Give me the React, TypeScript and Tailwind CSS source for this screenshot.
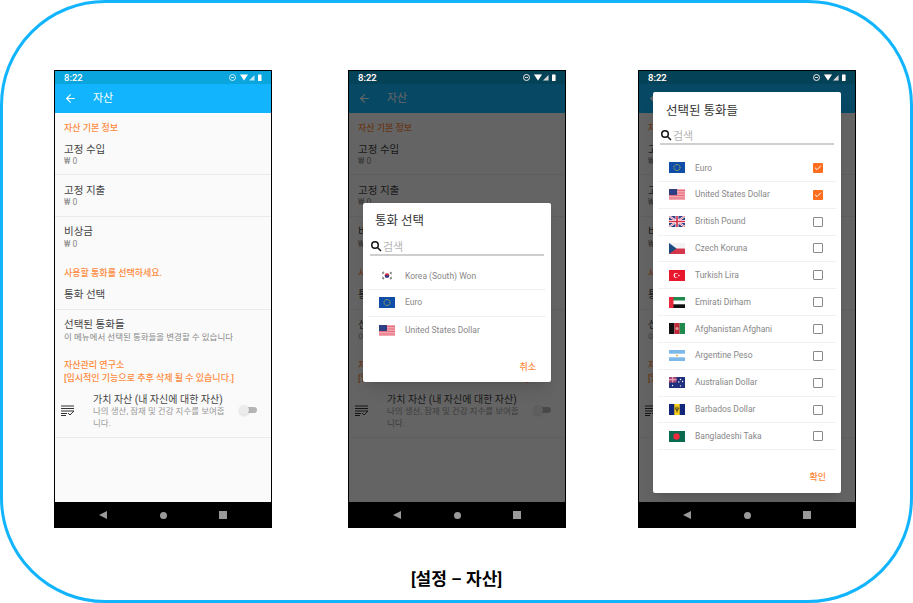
import React from 'react';
import { ArrowLeft, Check } from 'lucide-react';

const FONT = "font-['Roboto','Noto_Sans_CJK_KR',sans-serif]";

// flags are drawn on a 16x11 box
const flags: Record<string, React.ReactNode> = {
  kr: (
    <>
      <rect width="16" height="11" fill="#fff" />
      <circle cx="8" cy="5.5" r="2.3" fill="#d0253f" />
      <path d="M5.7 5.5a2.3 2.3 0 0 0 4.6 0z" fill="#1c3f94" />
      <path d="M3 3l2-1.2M3.4 4l1.8-1.2M11 2l2 1.2M10.8 3l1.8 1.2M3 8l2 1.2M3.4 7l1.8 1.2M11 9.2L13 8M10.8 8.2L12.6 7" stroke="#333" strokeWidth="0.7" />
    </>
  ),
  eu: (
    <>
      <rect width="16" height="11" fill="#0f4da8" />
      <circle cx="8" cy="5.5" r="3" fill="none" stroke="#e3d22a" strokeWidth="0.9" strokeDasharray="0.9 0.7" />
    </>
  ),
  us: (
    <>
      <rect width="16" height="11" fill="#f3a6ae" />
      <path d="M0 1.5h16M0 4h16M0 6.5h16M0 9h16" stroke="#e4687a" strokeWidth="0.9" />
      <rect width="8" height="6" fill="#2f3f86" />
    </>
  ),
  gb: (
    <>
      <rect width="16" height="11" fill="#2f3f86" />
      <path d="M0 0l16 11M16 0L0 11" stroke="#fff" strokeWidth="2" />
      <path d="M0 0l16 11M16 0L0 11" stroke="#e0566c" strokeWidth="0.8" />
      <path d="M8 0v11M0 5.5h16" stroke="#fff" strokeWidth="3" />
      <path d="M8 0v11M0 5.5h16" stroke="#d92f47" strokeWidth="1.7" />
    </>
  ),
  cz: (
    <>
      <rect width="16" height="5.5" fill="#f4f4f6" />
      <rect y="5.5" width="16" height="5.5" fill="#d3374a" />
      <path d="M0 0l7.5 5.5L0 11z" fill="#1c4b82" />
    </>
  ),
  tr: (
    <>
      <rect width="16" height="11" fill="#e8172c" />
      <circle cx="7" cy="5.5" r="2.4" fill="#fff" />
      <circle cx="7.7" cy="5.5" r="1.9" fill="#e8172c" />
      <circle cx="10" cy="5.5" r="0.7" fill="#fff" />
    </>
  ),
  ae: (
    <>
      <rect width="16" height="3.7" fill="#1f8a4c" />
      <rect y="3.7" width="16" height="3.6" fill="#fff" />
      <rect y="7.3" width="16" height="3.7" fill="#111" />
      <rect width="4.5" height="11" fill="#e6283a" />
    </>
  ),
  af: (
    <>
      <rect width="5.4" height="11" fill="#111" />
      <rect x="5.4" width="5.3" height="11" fill="#c22a3a" />
      <rect x="10.7" width="5.3" height="11" fill="#1f8a4c" />
      <circle cx="8" cy="5.5" r="1.5" fill="#e0a0a0" />
    </>
  ),
  ar: (
    <>
      <rect width="16" height="11" fill="#fff" />
      <rect width="16" height="3.7" fill="#7db8e8" />
      <rect y="7.3" width="16" height="3.7" fill="#7db8e8" />
      <circle cx="8" cy="5.5" r="1" fill="#e6b53c" />
    </>
  ),
  au: (
    <>
      <rect width="16" height="11" fill="#20307f" />
      <rect width="7.5" height="5.5" fill="#a04a78" />
      <path d="M3.7 0v5.5M0 2.7h7.5" stroke="#f0a0b0" strokeWidth="1.2" />
      <path d="M3.5 8.5h.1M11.5 2.5h.1M13.5 4.5h.1M9.8 5h.1M11.5 8.8h.1" stroke="#fff" strokeWidth="1.3" strokeLinecap="round" />
    </>
  ),
  bb: (
    <>
      <rect width="16" height="11" fill="#12277c" />
      <rect x="5.3" width="5.4" height="11" fill="#fcd116" />
      <path d="M8 2.5v6M6.5 3.5c0 2 .7 2.8 1.5 2.8s1.5-.8 1.5-2.8" stroke="#222" strokeWidth="0.8" fill="none" />
    </>
  ),
  bd: (
    <>
      <rect width="16" height="11" fill="#0a6a4f" />
      <circle cx="7.5" cy="5.5" r="3.2" fill="#ee2a3c" />
    </>
  ),
};

function Flag({ code }: { code: string }) {
  return (
    <svg width="16" height="11" viewBox="0 0 16 11" className="shrink-0">
      {flags[code]}
    </svg>
  );
}

function StatusContent() {
  return (
    <>
      <span className="text-[9.5px] font-medium text-white leading-none">8:22</span>
      <svg width="34" height="9" viewBox="0 0 34 9" fill="none">
        <circle cx="3.5" cy="4.5" r="3" stroke="#fff" strokeWidth="0.8" />
        <path d="M2 4.5h3" stroke="#fff" strokeWidth="0.8" />
        <path d="M11 1.5h8l-4 6z" fill="#fff" />
        <path d="M25.5 2v5.5H20z" fill="#fff" fillOpacity="0.75" />
        <rect x="29" y="1.5" width="3.5" height="6.5" rx="0.5" fill="#fff" />
      </svg>
    </>
  );
}

function NavBar() {
  return (
    <div className="h-[26px] bg-black flex items-center justify-between pl-[44px] pr-[44px]">
      <div className="w-0 h-0 border-y-[4px] border-y-transparent border-r-[8px] border-r-[#9a9a9a]" />
      <div className="w-[7px] h-[7px] rounded-full bg-[#9a9a9a]" />
      <div className="w-[8px] h-[8px] bg-[#9a9a9a]" />
    </div>
  );
}

function SectionTitle({ children, className }: { children: React.ReactNode; className: string }) {
  return <div className={`px-[9px] text-[9px] leading-[13px] font-medium text-[#ff8a3d] ${className}`}>{children}</div>;
}

function Row({ title, sub, className }: { title: string; sub?: string; className: string }) {
  return (
    <div className={`px-[9px] border-b-[1.5px] border-[#eaeaea] ${className}`}>
      <div className="text-[10.5px] leading-[12px] text-[#444]">{title}</div>
      {sub && <div className="text-[8.5px] leading-[10px] text-[#888]">{sub}</div>}
    </div>
  );
}

function SettingsScreen() {
  return (
    <div className="h-[389px] bg-[#fafafa] flex flex-col">
      <SectionTitle className="pt-[9px]">자산 기본 정보</SectionTitle>
      <Row title="고정 수입" sub="₩ 0" className="h-[40px] pt-[9px]" />
      <Row title="고정 지출" sub="₩ 0" className="h-[42px] pt-[10px]" />
      <div className="px-[9px] h-[41px] pt-[9px]">
        <div className="text-[10.5px] leading-[12px] text-[#444]">비상금</div>
        <div className="text-[8.5px] leading-[12px] text-[#888]">₩ 0</div>
      </div>
      <SectionTitle className="pt-[9px]">사용할 통화를 선택하세요.</SectionTitle>
      <Row title="통화 선택" className="h-[30px] pt-[9px]" />
      <div className="px-[9px] h-[44px] pt-[8px]">
        <div className="text-[10.5px] leading-[14px] text-[#444]">선택된 통화들</div>
        <div className="text-[8.5px] leading-[10px] text-[#888]">이 메뉴에서 선택된 통화들을 변경할 수 있습니다</div>
      </div>
      <SectionTitle className="pt-[5px]">
        자산관리 연구소
        <br />
        [임시적인 기능으로 추후 삭제 될 수 있습니다.]
      </SectionTitle>
      <div className="h-[53px] flex items-start border-b-[1.5px] border-[#eaeaea] pl-[6px] pr-[14px] pt-[9px]">
        <svg width="14" height="11" viewBox="0 0 14 11" className="shrink-0 mt-[11px]" fill="none" stroke="#333" strokeWidth="1">
          <path d="M0 1h13M0 3.5h13M0 6h13M0 8.5h6M0 10.5h5M7 8l2 2 4-4" />
        </svg>
        <div className="ml-[18px] w-[133px] shrink-0">
          <div className="text-[10px] leading-[11px] text-[#444] whitespace-nowrap">가치 자산 (내 자신에 대한 자산)</div>
          <div className="text-[8.5px] leading-[12px] text-[#999]">나의 생산, 잠재 및 건강 지수를 보여줍니다.</div>
        </div>
        <div className="ml-auto mt-[13px] relative w-[17px] h-[6px] rounded-full bg-[#b5b5b5]">
          <div className="absolute left-[-1px] top-[-2px] w-[10px] h-[10px] rounded-full bg-[#ececec] shadow-sm" />
        </div>
      </div>
    </div>
  );
}

function AppBar() {
  return (
    <div className="h-[29px] bg-[#12b5fd] flex items-center pl-[9px]">
      <ArrowLeft size={13} color="#fff" strokeWidth={2} />
      <span className="ml-[16px] mt-[2px] text-[11px] text-white">자산</span>
    </div>
  );
}

function Search({ className }: { className: string }) {
  return (
    <div className={`flex items-end h-[20px] mx-[7px] border-b-2 border-[#cfcfcf] ${className}`}>
      <svg width="12" height="12" viewBox="0 0 24 24" fill="none" stroke="#111" strokeWidth="3" className="shrink-0 mb-[2px]">
        <circle cx="10" cy="10" r="6.5" />
        <path d="M15 15l7 7" />
      </svg>
      <span className="ml-[1px] text-[11px] leading-[12px] text-[#b5b5b5]">검색</span>
    </div>
  );
}

function CurrencyRow({ code, name, check, last }: { code: string; name: string; check?: boolean | 'on'; last?: boolean }) {
  return (
    <div className={`h-[26.85px] flex items-center pl-[11px] pr-[13px] shrink-0 ${last ? '' : 'border-b-[1.5px] border-[#f0f0f0]'}`}>
      <Flag code={code} />
      <span className="ml-[10px] text-[8.5px] text-[#888]">{name}</span>
      {check !== undefined && (
        check === 'on' ? (
          <div className="ml-auto w-[10px] h-[10px] rounded-[1px] bg-[#ff6d1f] flex items-center justify-center">
            <Check size={8} color="#fff" strokeWidth={3} />
          </div>
        ) : (
          <div className="ml-auto w-[10px] h-[10px] rounded-[1px] border-[1.5px] border-[#8a8a8a]" />
        )
      )}
    </div>
  );
}

function Phone({ className, children }: { className?: string; children?: React.ReactNode }) {
  return (
    <div className={`relative w-[218px] h-[458px] border-x border-t border-black shrink-0 ${className ?? ''}`}>
      <div className="h-[13px] flex items-center justify-between pl-[9px] pr-[8px] bg-[#0aa5dc]">
        <StatusContent />
      </div>
      <AppBar />
      <SettingsScreen />
      <NavBar />
      {children}
    </div>
  );
}

function Dim({ children }: { children: React.ReactNode }) {
  return (
    <div className="absolute inset-x-0 top-0 bottom-[26px] bg-black/60">
      <div className="h-[13px] flex items-center justify-between pl-[9px] pr-[8px]">
        <StatusContent />
      </div>
      {children}
    </div>
  );
}

const allCurrencies: { code: string; name: string; check: boolean | 'on' }[] = [
  { code: 'eu', name: 'Euro', check: 'on' },
  { code: 'us', name: 'United States Dollar', check: 'on' },
  { code: 'gb', name: 'British Pound', check: true },
  { code: 'cz', name: 'Czech Koruna', check: true },
  { code: 'tr', name: 'Turkish Lira', check: true },
  { code: 'ae', name: 'Emirati Dirham', check: true },
  { code: 'af', name: 'Afghanistan Afghani', check: true },
  { code: 'ar', name: 'Argentine Peso', check: true },
  { code: 'au', name: 'Australian Dollar', check: true },
  { code: 'bb', name: 'Barbados Dollar', check: true },
  { code: 'bd', name: 'Bangladeshi Taka', check: true },
];

export default function App() {
  return (
    <div className={`w-[913px] h-[603px] bg-white border-[3px] border-[#12b5fd] rounded-[105px] pt-[67px] flex flex-col overflow-hidden ${FONT}`}>
      <div className="flex pl-[51px]">
        <Phone />
        <Phone className="ml-[76px]">
          <Dim>
            <div className="absolute left-[14px] top-[132px] w-[188px] h-[179px] bg-white rounded-[2px] shadow-lg flex flex-col">
              <div className="pl-[12px] pt-[9px] text-[12.5px] leading-[18px] text-[#333]">통화 선택</div>
              <Search className="mt-[6px]" />
              <div className="mx-[5px] mt-[7px]">
                <CurrencyRow code="kr" name="Korea (South) Won" />
                <CurrencyRow code="eu" name="Euro" />
                <CurrencyRow code="us" name="United States Dollar" last />
              </div>
              <div className="mt-auto pb-[8px] pr-[15px] text-right text-[9px] font-medium text-[#ff8a3d]">취소</div>
            </div>
          </Dim>
        </Phone>
        <Phone className="ml-[72px]">
          <Dim>
            <div className="absolute left-[14px] top-[21px] w-[188px] h-[401px] bg-white rounded-[2px] shadow-lg flex flex-col">
              <div className="pl-[13px] pt-[10px] text-[12.5px] leading-[18px] text-[#333]">선택된 통화들</div>
              <Search className="mt-[5px]" />
              <div className="mx-[5px] mt-[10px]">
                {allCurrencies.map(c => (
                  <CurrencyRow key={c.code} code={c.code} name={c.name} check={c.check} />
                ))}
              </div>
              <div className="mt-auto pb-[9px] pr-[15px] text-right text-[9px] font-medium text-[#ff8a3d]">확인</div>
            </div>
          </Dim>
        </Phone>
      </div>
      <div className="mt-[41px] text-center text-[17px] leading-[20px] font-semibold text-black">[설정 – 자산]</div>
    </div>
  );
}
